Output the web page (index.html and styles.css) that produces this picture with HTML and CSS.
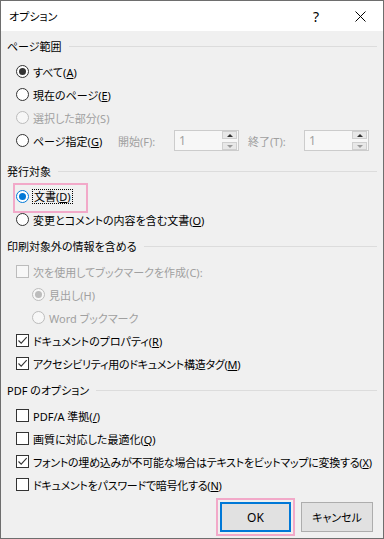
FILE: index.html
```html
<!DOCTYPE html>
<html lang="ja">
<head>
<meta charset="utf-8">
<title>オプション</title>
<link rel="stylesheet" href="styles.css">
</head>
<body>
<div class="dialog">
  <div class="titlebar">
    <span class="title">オプション</span>
    <span class="tbtn help">?</span>
    <span class="tbtn close"><svg width="11" height="11" viewBox="0 0 11 11"><path d="M0.5 0.5 L10.5 10.5 M10.5 0.5 L0.5 10.5" stroke="#000" stroke-width="1" fill="none"/></svg></span>
  </div>
  <div class="content">
    <div class="group g1">
      <div class="header">ページ範囲</div>
      <div class="rows">
        <div class="row"><span class="radio on"></span><span>すべて(<u>A</u>)</span></div>
        <div class="row"><span class="radio"></span><span>現在のページ(<u>E</u>)</span></div>
        <div class="row disabled"><span class="radio"></span><span>選択した部分(S)</span></div>
        <div class="row"><span class="radio"></span><span class="pg">ページ指定(<u>G</u>)</span>
          <span class="spinlbl first">開始(F):</span>
          <span class="spin"><span class="val">1</span><span class="btns"><span class="sb"><i class="up"></i></span><span class="sb"><i class="down"></i></span></span></span>
          <span class="spinlbl second">終了(T):</span>
          <span class="spin"><span class="val">1</span><span class="btns"><span class="sb"><i class="up"></i></span><span class="sb"><i class="down"></i></span></span></span>
        </div>
      </div>
    </div>
    <div class="group g2">
      <div class="header">発行対象</div>
      <div class="rows">
        <div class="row"><span class="radio on blue"></span><span class="focus">文書(<u>D</u>)</span><span class="mark"></span></div>
        <div class="row"><span class="radio"></span><span>変更とコメントの内容を含む文書(<u>O</u>)</span></div>
      </div>
    </div>
    <div class="group g3">
      <div class="header">印刷対象外の情報を含める</div>
      <div class="rows">
        <div class="row disabled"><span class="check"></span><span>次を使用してブックマークを作成(C):</span></div>
        <div class="row disabled indent"><span class="radio on"></span><span>見出し(H)</span></div>
        <div class="row disabled indent"><span class="radio"></span><span>Word ブックマーク</span></div>
        <div class="row"><span class="check"><svg width="11" height="11" viewBox="0 0 11 11"><path d="M1.5 5.5 L4.2 8.2 L9.7 2.2" stroke="#333" stroke-width="1.1" fill="none"/></svg></span><span>ドキュメントのプロパティ(<u>R</u>)</span></div>
        <div class="row tight"><span class="check"><svg width="11" height="11" viewBox="0 0 11 11"><path d="M1.5 5.5 L4.2 8.2 L9.7 2.2" stroke="#333" stroke-width="1.1" fill="none"/></svg></span><span>アクセシビリティ用のドキュメント構造タグ(<u>M</u>)</span></div>
      </div>
    </div>
    <div class="group g4">
      <div class="header">PDF のオプション</div>
      <div class="rows">
        <div class="row"><span class="check"></span><span>PDF/A 準拠(<u>/</u>)</span></div>
        <div class="row"><span class="check"></span><span>画質に対応した最適化(<u>Q</u>)</span></div>
        <div class="row tight"><span class="check"><svg width="11" height="11" viewBox="0 0 11 11"><path d="M1.5 5.5 L4.2 8.2 L9.7 2.2" stroke="#333" stroke-width="1.1" fill="none"/></svg></span><span>フォントの埋め込みが不可能な場合はテキストをビットマップに変換する(<u>X</u>)</span></div>
        <div class="row tight"><span class="check"></span><span>ドキュメントをパスワードで暗号化する(<u>N</u>)</span></div>
      </div>
    </div>
    <div class="buttons">
      <div class="okwrap"><div class="btn ok">OK</div></div>
      <div class="btn cancel">キャンセル</div>
    </div>
  </div>
</div>
</body>
</html>
```
FILE: styles.css
```css
body {
  margin: 0;
}
.dialog {
  width: 384px;
  height: 539px;
  box-sizing: border-box;
  border: 1px solid #6e6e6e;
  background: #f0f0f0;
  display: flex;
  flex-direction: column;
  font-family: "Noto Sans", "Noto Sans CJK JP", sans-serif;
  font-size: 11px;
  font-feature-settings: "palt";
  color: #000;
  overflow: hidden;
}
.titlebar {
  flex: none;
  height: 30px;
  background: #fff;
  display: flex;
  align-items: center;
  padding-left: 8px;
}
.title {
  flex: 1;
}
.tbtn {
  height: 30px;
  display: flex;
  align-items: center;
  justify-content: center;
}
.help {
  width: 44px;
  font-size: 14px;
}
.close {
  width: 45px;
}
.content {
  flex: 1;
  padding: 6px 6px 0 6px;
  display: flex;
  flex-direction: column;
}
.header {
  height: 18px;
  display: flex;
  align-items: center;
  gap: 7px;
  white-space: nowrap;
}
.header::after {
  content: "";
  flex: 1;
  height: 1px;
  background: #dcdcdc;
}
.rows {
  margin-top: 5px;
}
.g2 {
  margin-top: 10px;
}
.g3,
.g4 {
  margin-top: 6px;
}
.row {
  position: relative;
  height: 23px;
  display: flex;
  align-items: center;
  padding-left: 9px;
  white-space: nowrap;
}
.row.tight {
  letter-spacing: -0.25px;
}
.row.indent {
  padding-left: 25px;
}
.row.disabled {
  color: #a0a0a0;
}
.radio {
  flex: none;
  width: 13px;
  height: 13px;
  box-sizing: border-box;
  border: 1px solid #333;
  border-radius: 50%;
  background: #fff;
  margin-right: 4px;
  display: flex;
  align-items: center;
  justify-content: center;
}
.radio.on::after {
  content: "";
  width: 7px;
  height: 7px;
  border-radius: 50%;
  background: #333;
}
.radio.blue {
  border-color: #0078d7;
}
.radio.blue::after {
  background: #0078d7;
}
.disabled .radio {
  border-color: #bcbcbc;
  background: #f7f7f7;
}
.disabled .radio.on::after {
  background: #bcbcbc;
}
.check {
  flex: none;
  width: 13px;
  height: 13px;
  box-sizing: border-box;
  border: 1px solid #333;
  background: #fff;
  margin-right: 4px;
  display: flex;
  align-items: center;
  justify-content: center;
}
.disabled .check {
  border-color: #bcbcbc;
  background: #f7f7f7;
}
.focus {
  outline: 1px dotted #000;
  outline-offset: 0;
  padding: 0 1px;
  line-height: 13px;
}
.mark {
  position: absolute;
  left: 6px;
  top: -2px;
  width: 75px;
  height: 30px;
  box-sizing: border-box;
  border: 2px solid #f2a9c9;
}
.pg {
  width: 73px;
}
.spinlbl {
  color: #a0a0a0;
}
.spinlbl.first {
  margin-left: 12px;
  width: 48px;
}
.spinlbl.second {
  margin-left: 9px;
  width: 48px;
}
.spin {
  margin-left: 8px;
  width: 65px;
  height: 21px;
  box-sizing: border-box;
  border: 1px solid #cccccc;
  background: #f7f7f7;
  display: flex;
  align-items: center;
}
.spin .val {
  flex: 1;
  padding-left: 4px;
  color: #a0a0a0;
  font-size: 12px;
}
.btns {
  width: 15px;
  height: 19px;
  display: flex;
  flex-direction: column;
  justify-content: space-between;
  padding-right: 1px;
}
.sb {
  height: 8px;
  box-sizing: border-box;
  border: 1px solid #cfcfcf;
  background: #e8e8e8;
  display: flex;
  align-items: center;
  justify-content: center;
}
.sb i {
  width: 0;
  height: 0;
  border-left: 3px solid transparent;
  border-right: 3px solid transparent;
}
.sb i.up {
  border-bottom: 3px solid #333;
}
.sb i.down {
  border-top: 3px solid #9a9a9a;
}
.buttons {
  margin-top: 2px;
  display: flex;
  justify-content: flex-end;
  align-items: center;
  gap: 6px;
  padding-right: 4px;
}
.okwrap {
  border: 2px solid #f2a9c9;
  padding: 2px;
}
.btn {
  width: 71px;
  height: 30px;
  box-sizing: border-box;
  background: #e1e1e1;
  border: 1px solid #adadad;
  display: flex;
  align-items: center;
  justify-content: center;
  font-size: 12px;
}
.btn.ok {
  border: 2px solid #0078d7;
}
.btn.cancel {
  width: 72px;
  font-size: 11px;
}
```
